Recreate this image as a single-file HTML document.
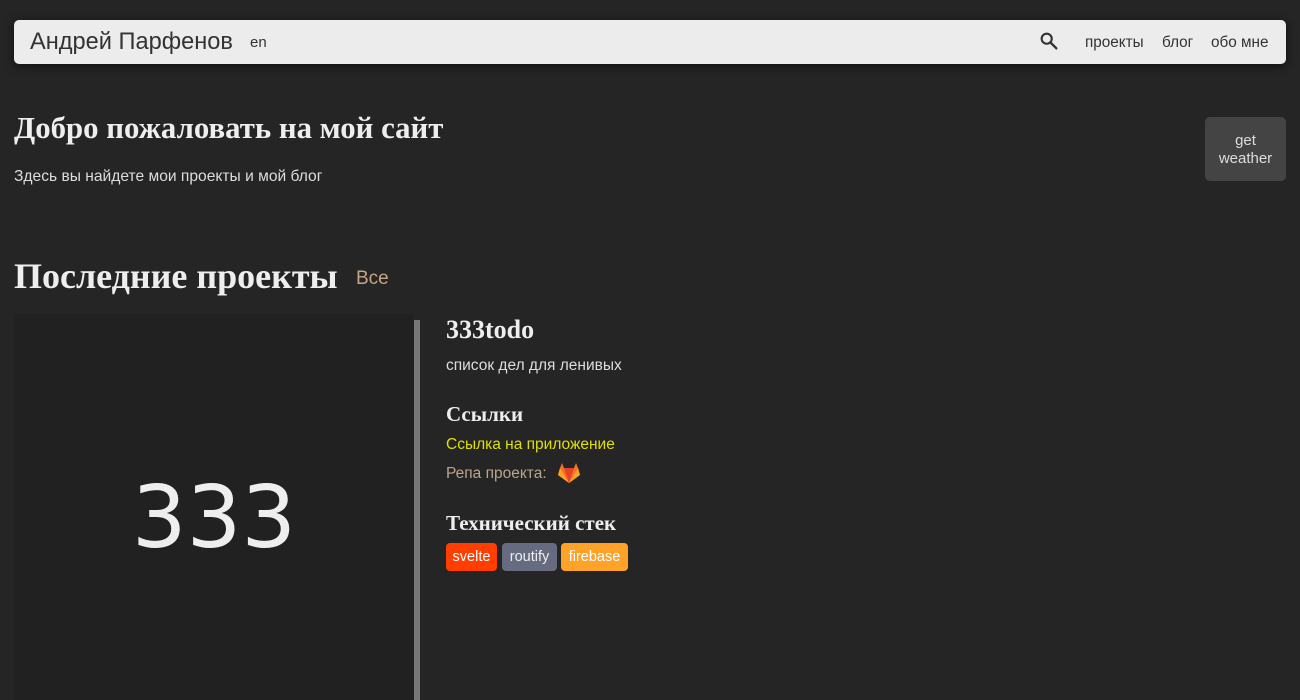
<!DOCTYPE html>
<html><head><meta charset="utf-8"><style>
*{margin:0;padding:0;box-sizing:border-box}
body{width:1300px;height:700px;overflow:hidden;background:#252525;font-family:"Liberation Sans","DejaVu Sans",sans-serif;color:#eee;position:relative}
.nav{position:absolute;left:14px;top:20px;width:1272px;height:44px;background:#ececec;border-radius:5px;box-shadow:0 2px 10px rgba(0,0,0,.6);color:#333}
.abs{position:absolute;white-space:nowrap}
.serif{font-family:"Liberation Serif","DejaVu Serif",serif;font-weight:bold}
</style></head><body>
<div class="nav">
<div class="abs" style="left:16px;top:9px;font-size:23.6px;">Андрей Парфенов</div>
<div class="abs" style="left:236px;top:14px;font-size:15px;">en</div>
<svg class="abs" style="left:1024px;top:10px" width="22" height="22" viewBox="0 0 24 24"><circle cx="9.5" cy="9.5" r="5.5" fill="none" stroke="#333" stroke-width="2.3"/><path d="M13.5 13.5 L20 20" stroke="#333" stroke-width="2.6" stroke-linecap="round"/></svg>
<div class="abs" style="left:1071px;top:14px;font-size:15.3px;">проекты</div>
<div class="abs" style="left:1148px;top:14px;font-size:15.3px;">блог</div>
<div class="abs" style="left:1197px;top:14px;font-size:15.3px;">обо мне</div>
</div>
<div class="abs serif" style="left:14px;top:111px;font-size:30.8px;color:#eee">Добро пожаловать на мой сайт</div>
<div class="abs" style="left:14px;top:168px;font-size:15.6px;color:#ddd">Здесь вы найдете мои проекты и мой блог</div>
<div class="abs" style="left:1205px;top:117px;width:81px;height:64px;background:#444;border-radius:5px;color:#ddd;font-size:15px;text-align:center;line-height:18px;padding-top:15px">get<br>weather</div>
<div class="abs serif" style="left:14px;top:255px;font-size:36px;color:#eee">Последние проекты</div>
<div class="abs" style="left:356px;top:268px;font-size:19px;color:#c4a586">Все</div>
<div class="abs" style="left:14px;top:314px;width:400px;height:386px;background:#212121"></div>
<div class="abs" style="left:414px;top:320px;width:6px;height:380px;background:#777"></div>
<div class="abs" style="left:14px;top:468px;width:400px;text-align:center;font-size:86px;font-family:'DejaVu Sans',sans-serif;color:#eee">333</div>
<div class="abs serif" style="left:446px;top:315px;font-size:26px;color:#eee">333todo</div>
<div class="abs" style="left:446px;top:357px;font-size:15.5px;color:#ddd">список дел для ленивых</div>
<div class="abs serif" style="left:446px;top:402px;font-size:21px;color:#eee">Ссылки</div>
<div class="abs" style="left:446px;top:436px;font-size:15.5px;color:#dde000">Ссылка на приложение</div>
<div class="abs" style="left:446px;top:465px;font-size:15.5px;color:#bba58e">Репа проекта:</div>
<svg class="abs" style="left:557px;top:462px" width="24" height="22" viewBox="0 0 24 22"><path d="M12 21L1 13l2-7 2-5 2 5h10l2-5 2 5 2 7z" fill="#fc6d26"/><path d="M12 21L7 6h10z" fill="#e24329"/><path d="M12 21L1 13l2-7z" fill="#fca326"/><path d="M12 21l11-8-2-7z" fill="#fca326"/></svg>
<div class="abs serif" style="left:446px;top:511px;font-size:21px;color:#eee">Технический стек</div>
<div class="abs" style="left:446px;top:543px;width:51px;height:28px;background:#ff3e00;border-radius:4px;font-size:14.5px;line-height:28px;text-align:center;color:#fff">svelte</div>
<div class="abs" style="left:502px;top:543px;width:55px;height:28px;background:#666b80;border-radius:4px;font-size:14.5px;line-height:28px;text-align:center;color:#eee">routify</div>
<div class="abs" style="left:561px;top:543px;width:67px;height:28px;background:#ffa328;border-radius:4px;font-size:14.5px;line-height:28px;text-align:center;color:#fff">firebase</div>
</body></html>
